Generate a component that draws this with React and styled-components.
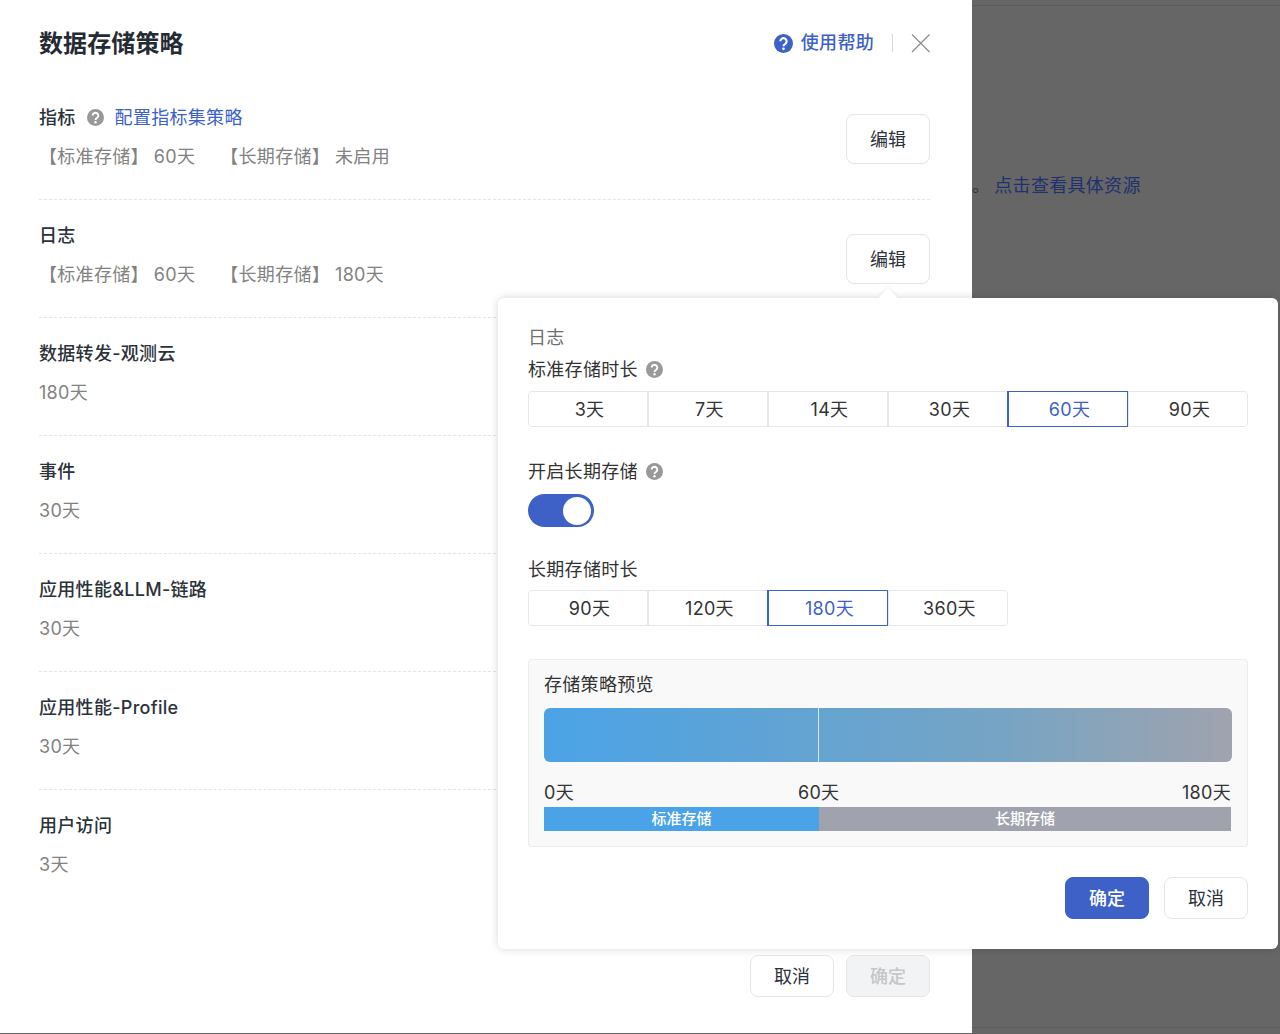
import React from "react";
import styled, { createGlobalStyle } from "styled-components";

const BLUE = "#3d61c7";

const GlobalStyle = createGlobalStyle`
  html, body {
    margin: 0;
    padding: 0;
    background: #666666;
    font-family: Inter, "Noto Sans CJK SC", sans-serif;
    font-size: 18px;
    line-height: 26px;
    letter-spacing: 0.3px;
  }
  * {
    box-sizing: border-box;
  }
`;

const Page = styled.div`
  position: relative;
  display: flex;
  width: 1280px;
  height: 1034px;
  overflow: hidden;
`;

const Drawer = styled.div`
  display: flex;
  flex-direction: column;
  width: 972px;
  height: 1033px;
  padding: 0 42px 36px 39px;
  background: #ffffff;
`;

const Header = styled.div`
  display: flex;
  align-items: center;
  justify-content: space-between;
  height: 82px;
  padding-top: 4px;
`;

const Title = styled.div`
  padding-top: 2px;
  font-size: 24px;
  font-weight: 600;
  letter-spacing: 0.1px;
  color: #252b33;
`;

const HeaderTools = styled.div`
  display: flex;
  align-items: center;
  margin-right: -1px;
  color: ${BLUE};
`;

const HelpLink = styled.a`
  display: flex;
  align-items: center;
  gap: 8px;
  font-weight: 500;
  color: ${BLUE};
`;

const ToolDivider = styled.span`
  width: 1px;
  height: 18px;
  margin: 0 18px;
  background: #d8d8d8;
`;

const CloseIcon = styled.svg`
  display: block;
  width: 20px;
  height: 20px;
  stroke: #8c8c8c;
  stroke-width: 1.2;
  fill: none;
`;

const Row = styled.div`
  display: flex;
  justify-content: space-between;
  align-items: flex-start;
  height: 118px;
  padding-top: 23px;
  border-bottom: ${(p) => (p.$last ? "none" : "1px dashed #e4e4e6")};
`;

const RowTitle = styled.div`
  display: flex;
  align-items: center;
  height: 26px;
  font-weight: 500;
  color: #2c323a;
`;

const TitleHint = styled.span`
  display: flex;
  margin: -2px 11px 0 11px;
`;

const ConfigLink = styled.a`
  font-weight: 400;
  color: ${BLUE};
`;

const RowValue = styled.div`
  display: flex;
  gap: 25px;
  margin-top: 13px;
  color: #828282;
`;

const ValueItem = styled.span`
  display: flex;
  gap: 5px;
`;

const Button = styled.button`
  width: 84px;
  height: ${(p) => (p.$tall ? "50px" : "42px")};
  margin-top: ${(p) => p.$top || 0}px;
  padding: 0 0 2px;
  border: 1px solid ${(p) => (p.$primary ? BLUE : "#e4e5e8")};
  border-radius: 8px;
  background: ${(p) => (p.$primary ? BLUE : p.disabled ? "#f2f3f5" : "#ffffff")};
  color: ${(p) => (p.$primary ? "#ffffff" : p.disabled ? "#c4c6ca" : "#2c323a")};
  font-family: inherit;
  font-size: 18px;
  font-weight: ${(p) => (p.$primary || p.disabled ? 500 : 400)};
`;

const Footer = styled.div`
  display: flex;
  justify-content: flex-end;
  gap: 12px;
  margin-top: auto;
`;

const Behind = styled.div`
  display: flex;
  flex: 1;
  flex-direction: column;
`;

const BehindRule = styled.div`
  height: 6px;
  border-bottom: 1px solid #5b5b5b;
`;

const BehindText = styled.div`
  margin-top: 166px;
  padding-top: 1px;
  color: #333333;
`;

const BehindLink = styled.a`
  margin-left: 4px;
  color: #21316e;
`;

const BehindFoot = styled.div`
  height: 1px;
  margin-top: auto;
  margin-bottom: 6px;
  background: #5b5b5b;
`;

const Popover = styled.div`
  position: absolute;
  left: 498px;
  top: 298px;
  width: 780px;
  height: 651px;
  padding: 26px 30px 30px;
  border-radius: 6px;
  background: #ffffff;
  box-shadow: 0 0 8px rgba(0, 0, 0, 0.16);

  &::before {
    content: "";
    position: absolute;
    left: 383px;
    top: -7px;
    width: 14px;
    height: 14px;
    background: #ffffff;
    transform: rotate(45deg);
    box-shadow: -1px -1px 3px rgba(0, 0, 0, 0.06);
  }
`;

const PopTitle = styled.div`
  position: relative;
  height: 26px;
  padding-top: 1px;
  color: #6f6f6f;
`;

const Field = styled.div`
  display: flex;
  align-items: center;
  gap: 8px;
  height: 26px;
  margin-top: ${(p) => p.$top}px;
  padding-top: 2px;
  color: #333333;

  svg {
    margin-top: -2px;
  }
`;

const Segments = styled.div`
  display: flex;
  margin-top: ${(p) => p.$top}px;
`;

const Segment = styled.div`
  position: relative;
  width: 120px;
  height: 36px;
  padding-left: 3px;
  border: 1px solid ${(p) => (p.$active ? BLUE : "#e6e7ea")};
  box-shadow: ${(p) => (p.$active ? `-1px 0 0 ${BLUE}` : "none")};
  color: ${(p) => (p.$active ? BLUE : "#333333")};
  line-height: 36px;
  text-align: center;

  &:first-child {
    border-radius: 4px 0 0 4px;
  }
  &:last-child {
    border-radius: 0 4px 4px 0;
  }
`;

const Toggle = styled.div`
  display: flex;
  justify-content: flex-end;
  align-items: center;
  width: 66px;
  height: 33px;
  margin-top: 10px;
  padding-right: 3px;
  border-radius: 17px;
  background: ${BLUE};
`;

const ToggleKnob = styled.span`
  width: 28px;
  height: 28px;
  border-radius: 50%;
  background: #ffffff;
`;

const Preview = styled.div`
  height: 188px;
  margin-top: 33px;
  padding: 11px 15px 15px;
  border: 1px solid #ececee;
  border-radius: 3px;
  background: #f9f9f9;
  color: #333333;
`;

const PreviewTitle = styled.div`
  height: 26px;
  padding-top: 1px;
`;

const GradientBar = styled.div`
  display: flex;
  justify-content: flex-start;
  height: 54px;
  margin-top: 11px;
  border-radius: 6px;
  background: linear-gradient(to right, #4aa3e6, #76a4c4 66%, #a0a3ae);
`;

const GradientMark = styled.span`
  width: 1px;
  margin-left: 274px;
  background: rgba(255, 255, 255, 0.75);
`;

const Ticks = styled.div`
  display: grid;
  grid-template-columns: 254px 1fr auto;
  height: 26px;
  margin-top: 17px;
  padding: 1px 1px 0 0;
`;

const Legend = styled.div`
  display: flex;
  width: 687px;
  height: 24px;
  margin-top: 2px;
`;

const LegendPart = styled.div`
  flex: ${(p) => p.$size} 0 0;
  background: ${(p) => p.$color};
  color: #ffffff;
  font-size: 15px;
  line-height: 24px;
  font-weight: 500;
  letter-spacing: 0;
  text-align: center;
`;

const PopFooter = styled.div`
  display: flex;
  justify-content: flex-end;
  gap: 15px;
  margin-top: 30px;
`;

const rows = [
  { name: "指标", link: true, top: 9, values: [["【标准存储】", "60天"], ["【长期存储】", "未启用"]] },
  { name: "日志", top: 11, values: [["【标准存储】", "60天"], ["【长期存储】", "180天"]] },
  { name: "数据转发-观测云", top: 11, values: [["", "180天"]] },
  { name: "事件", top: 11, values: [["", "30天"]] },
  { name: "应用性能&LLM-链路", top: 11, values: [["", "30天"]] },
  { name: "应用性能-Profile", top: 11, values: [["", "30天"]] },
  { name: "用户访问", top: 11, values: [["", "3天"]], last: true },
];

const standardDays = ["3天", "7天", "14天", "30天", "60天", "90天"];
const longDays = ["90天", "120天", "180天", "360天"];

// filled circle with a heavy question mark, same shape in grey and blue
function QuestionIcon({ size = 17, color = "#999999" }) {
  return (
    <svg width={size} height={size} viewBox="0 0 20 20" style={{ display: "block" }}>
      <circle cx="10" cy="10" r="10" fill={color} />
      <path
        d="M6.7 7.7a3.3 3.3 0 1 1 5.2 2.7c-1.2.8-1.9 1.3-1.9 2.5"
        fill="none"
        stroke="#ffffff"
        strokeWidth="2.2"
      />
      <circle cx="10" cy="15.6" r="1.4" fill="#ffffff" />
    </svg>
  );
}

export default function App() {
  return (
    <Page>
      <GlobalStyle />
      <Drawer>
        <Header>
          <Title>数据存储策略</Title>
          <HeaderTools>
            <HelpLink>
              <QuestionIcon size={19} color={BLUE} />
              使用帮助
            </HelpLink>
            <ToolDivider />
            <CloseIcon viewBox="0 0 20 20">
              <path d="M1 1.5 18.5 19M18.5 1.5 1 19" />
            </CloseIcon>
          </HeaderTools>
        </Header>
        {rows.map((row) => (
          <Row key={row.name} $last={row.last}>
            <div>
              <RowTitle>
                {row.name}
                {row.link && (
                  <>
                    <TitleHint>
                      <QuestionIcon />
                    </TitleHint>
                    <ConfigLink>配置指标集策略</ConfigLink>
                  </>
                )}
              </RowTitle>
              <RowValue>
                {row.values.map(([label, value]) => (
                  <ValueItem key={label + value}>
                    {label && <span>{label}</span>}
                    <span>{value}</span>
                  </ValueItem>
                ))}
              </RowValue>
            </div>
            <Button $tall $top={row.top}>
              编辑
            </Button>
          </Row>
        ))}
        <Footer>
          <Button>取消</Button>
          <Button disabled>确定</Button>
        </Footer>
      </Drawer>

      <Behind>
        <BehindRule />
        <BehindText>
          。<BehindLink>点击查看具体资源</BehindLink>
        </BehindText>
        <BehindFoot />
      </Behind>

      <Popover>
        <PopTitle>日志</PopTitle>
        <Field $top={6}>
          标准存储时长 <QuestionIcon />
        </Field>
        <Segments $top={9}>
          {standardDays.map((d) => (
            <Segment key={d} $active={d === "60天"}>
              {d}
            </Segment>
          ))}
        </Segments>
        <Field $top={31}>
          开启长期存储 <QuestionIcon />
        </Field>
        <Toggle>
          <ToggleKnob />
        </Toggle>
        <Field $top={29}>长期存储时长</Field>
        <Segments $top={8}>
          {longDays.map((d) => (
            <Segment key={d} $active={d === "180天"}>
              {d}
            </Segment>
          ))}
        </Segments>
        <Preview>
          <PreviewTitle>存储策略预览</PreviewTitle>
          <GradientBar>
            <GradientMark />
          </GradientBar>
          <Ticks>
            <span>0天</span>
            <span>60天</span>
            <span>180天</span>
          </Ticks>
          <Legend>
            <LegendPart $size={275} $color="#4aa3e6">
              标准存储
            </LegendPart>
            <LegendPart $size={412} $color="#a0a3ae">
              长期存储
            </LegendPart>
          </Legend>
        </Preview>
        <PopFooter>
          <Button $primary>确定</Button>
          <Button>取消</Button>
        </PopFooter>
      </Popover>
    </Page>
  );
}
